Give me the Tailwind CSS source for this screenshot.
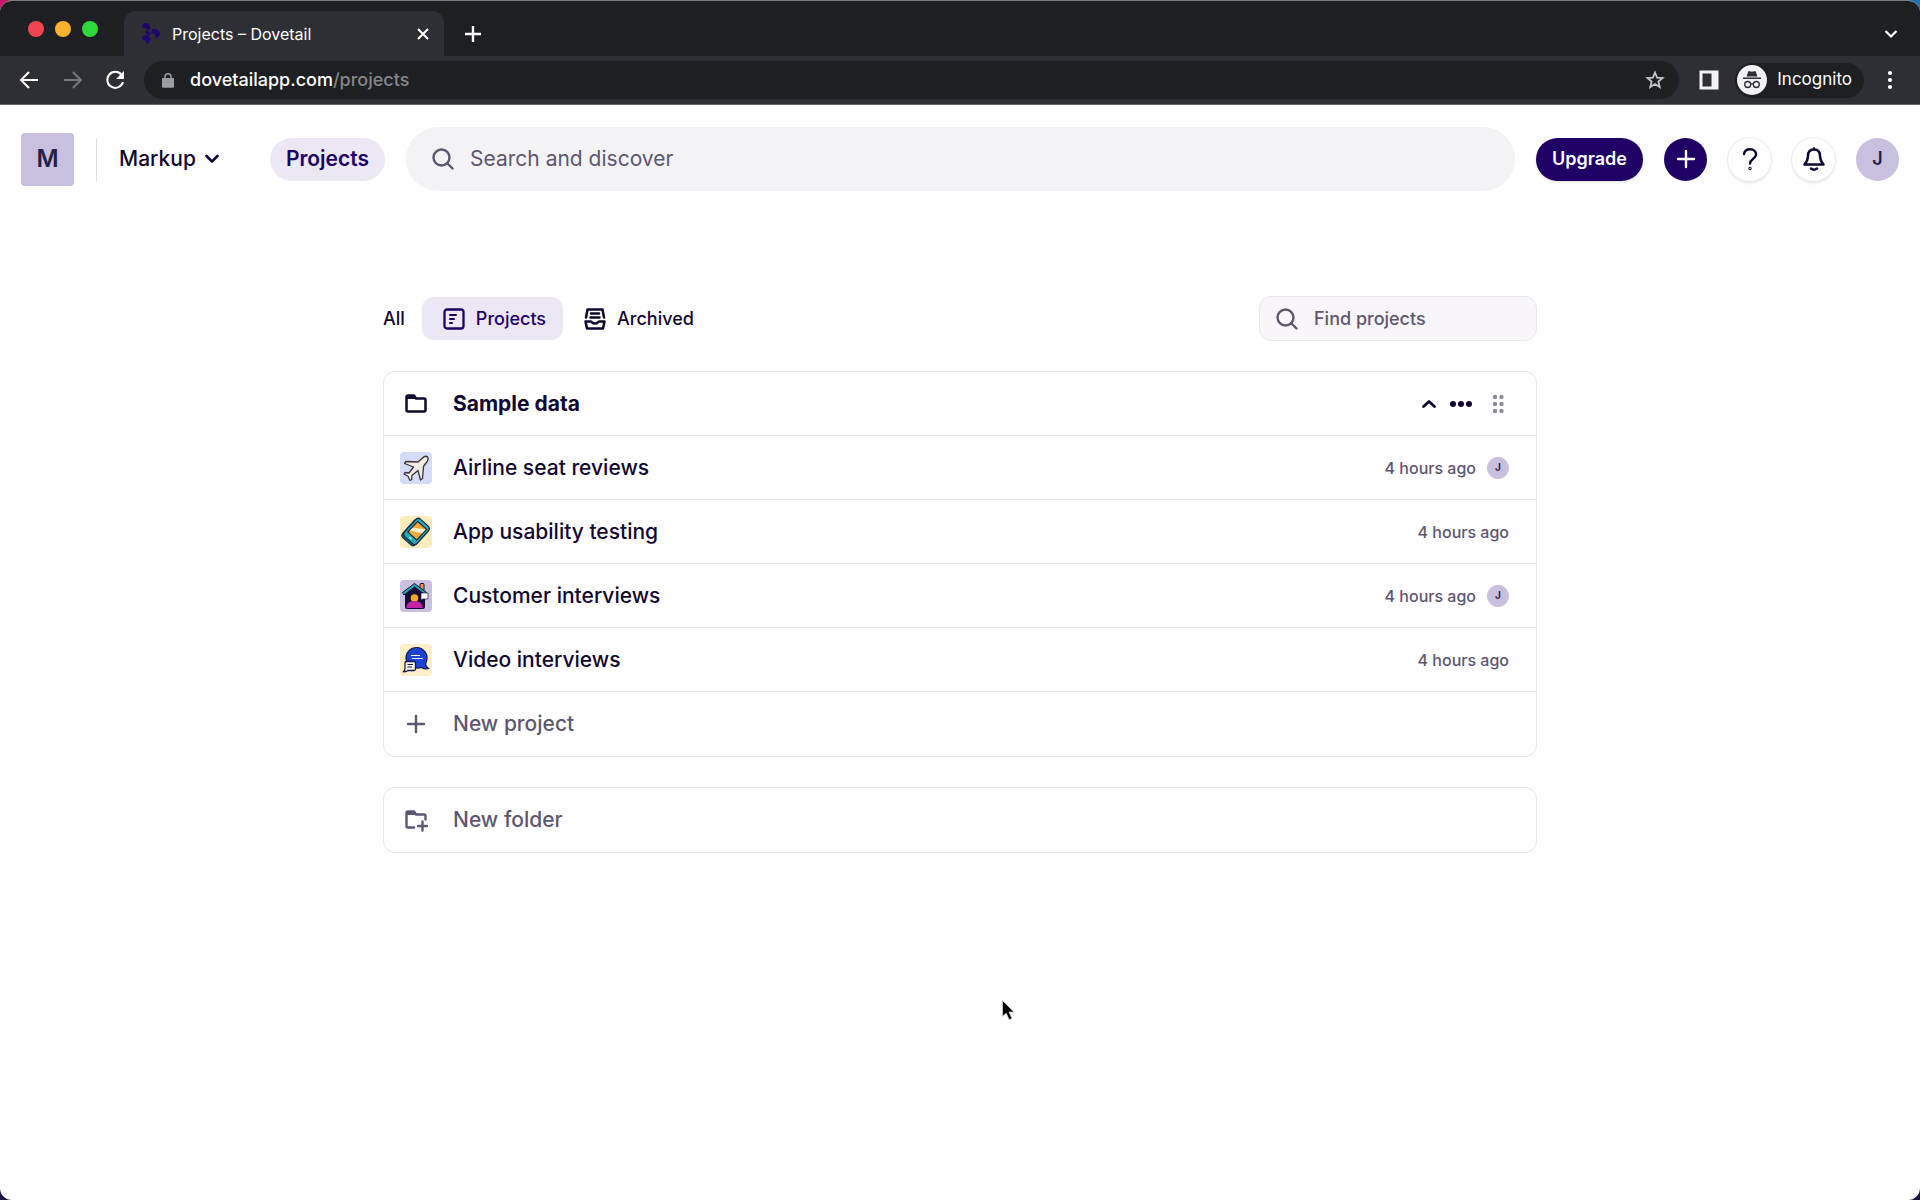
<!DOCTYPE html>
<html lang="en">

<head>
    <meta charset="UTF-8">
    <meta name="viewport" content="width=device-width, initial-scale=1.0">
    <title>Projects – Dovetail</title>
    <script src="https://cdn.jsdelivr.net/npm/@tailwindcss/browser@4"></script>
</head>

<body class="bg-linear-to-r from-[#c9146a] to-[#1273b5] font-['Inter',sans-serif] text-[#120730]">

    <div class="bg-[linear-gradient(to_bottom,transparent_50%,#1b1545_50%)]">
    <div class="relative flex min-h-screen flex-col overflow-hidden rounded-xl border-t border-[#77797c] bg-white">

        <!-- Tab strip -->
        <div class="flex h-[55px] items-end bg-[#1e1f22] pl-7 pr-5">
            <div class="flex h-[55px] items-center gap-[11px] pr-[26px]">
                <span class="size-4 rounded-full bg-[#f2444f]"></span>
                <span class="size-4 rounded-full bg-[#f8b22f]"></span>
                <span class="size-4 rounded-full bg-[#30d63c]"></span>
            </div>
            <div class="flex h-[45px] w-[320px] items-center rounded-t-xl bg-[#2e2f34] pl-[17px] pr-[13px]">
                <svg class="h-[22px] w-5 shrink-0" viewBox="0 0 20 22" fill="#20066b">
                    <path d="M2 1C5-1 9 0 9.500 5L8 8C7 6 4 5 1 4Z" />
                    <path d="M2 13C5 11 9 13 10 17L6 22C6 19 4 17 1 16Z" />
                    <path d="M11 6C16 5 19 8 19 12L14 16C15 12 14 10 10 10Z" />
                    <path d="M6 7 10 11 7 13 4 10Z" />
                </svg>
                <span class="ml-[11px] flex-1 text-base text-white">Projects – Dovetail</span>
                <button aria-label="Close tab" class="text-white">
                    <svg class="size-4" viewBox="0 0 16 16" fill="none" stroke="currentColor" stroke-width="2"><path d="m3 3 10 10M13 3 3 13" /></svg>
                </button>
            </div>
            <button aria-label="New tab" class="ml-5 flex h-[45px] items-center text-white">
                <svg class="size-[18px]" viewBox="0 0 18 18" fill="none" stroke="currentColor" stroke-width="2.400"><path d="M9 1v16M1 9h16" /></svg>
            </button>
            <button aria-label="Search tabs" class="ml-auto flex h-[45px] items-center text-white">
                <svg class="size-[18px]" viewBox="0 0 18 18" fill="none" stroke="currentColor" stroke-width="2.200"><path d="m3.500 6 5.500 5.500L14.500 6" /></svg>
            </button>
        </div>

        <!-- Toolbar -->
        <div class="flex h-[49px] items-center border-b border-[#66676b] bg-[#2e2f34] pl-[19px] pr-5 text-white">
            <button aria-label="Back">
                <svg class="size-5" viewBox="0 0 20 20" fill="none" stroke="currentColor" stroke-width="2"><path d="M19 10H3M10 2l-8 8 8 8" /></svg>
            </button>
            <button aria-label="Forward" class="ml-6 text-[#77787c]">
                <svg class="size-5" viewBox="0 0 20 20" fill="none" stroke="currentColor" stroke-width="2"><path d="M1 10h16M10 2l8 8-8 8" /></svg>
            </button>
            <button aria-label="Reload" class="ml-[22px]">
                <svg class="size-5" viewBox="0 0 20 20" fill="none" stroke="currentColor" stroke-width="2"><path d="M16.500 4.800A8 8 0 1 0 18 12" /><path d="M19 1v8h-8Z" fill="currentColor" stroke="none" /></svg>
            </button>
            <div class="ml-[19px] flex h-[38px] flex-1 items-center rounded-full bg-[#1e1f22] pl-[18px] pr-[14px]">
                <svg class="h-[15px] w-3 shrink-0" viewBox="0 0 12 15" fill="#9b9ca2"><path d="M1.500 5h9A1.200 1.200 0 0 1 12 6.300v7.200a1.200 1.200 0 0 1-1.200 1.300H1.200A1.200 1.200 0 0 1 0 13.500V6.300A1.200 1.200 0 0 1 1.500 5Z" /><path d="M3 6V3.800a3 3 0 0 1 6 0V6" fill="none" stroke="#9b9ca2" stroke-width="1.500" /></svg>
                <a href="#" class="ml-4 flex-1 text-lg font-medium">dovetailapp.com<span class="text-[#85868b]">/projects</span></a>
                <button aria-label="Bookmark" class="text-[#c3c4c8]">
                    <svg class="size-5" viewBox="0 0 20 20" fill="none" stroke="currentColor" stroke-width="1.800"><path d="m10 2.500 2.100 5.100 5.500.4-4.200 3.600 1.300 5.400L10 14.100 5.300 17l1.300-5.400L2.400 8l5.500-.4Z" /></svg>
                </button>
            </div>
            <button aria-label="Side panel" class="ml-5">
                <svg class="size-5" viewBox="0 0 20 20"><path d="M.5.500h19v19H.5ZM3.500 3.500v13h9v-13Z" fill="#f1f1f6" fill-rule="evenodd" /></svg>
            </button>
            <div class="ml-4 flex h-[35px] items-center rounded-full bg-[#1e1f22] pl-[2px] pr-3">
                <svg class="size-[30px]" viewBox="0 0 30 30">
                    <circle cx="15" cy="15" r="15" fill="#f1f1f6" />
                    <path d="M6 12.500h18v1.500H6ZM9.500 11.500l2-5.500 3.500.7 3.500-.7 2 5.500Z" fill="#2e2f34" />
                    <g fill="none" stroke="#2e2f34" stroke-width="1.300"><circle cx="10.700" cy="19.500" r="3" /><circle cx="19.300" cy="19.500" r="3" /><path d="M13.700 19q1.300-.8 2.600 0" /></g>
                </svg>
                <span class="ml-[10px] text-[17px]">Incognito</span>
            </div>
            <button aria-label="Menu" class="ml-4">
                <svg class="size-5" viewBox="0 0 20 20" fill="currentColor"><circle cx="10" cy="3" r="2.100" /><circle cx="10" cy="10" r="2.100" /><circle cx="10" cy="17" r="2.100" /></svg>
            </button>
        </div>

        <!-- App header -->
        <header class="flex items-center px-[21px] pt-[27px] pb-5">
            <span class="flex size-[53px] items-center justify-center rounded bg-[#c9bfdf] text-2xl font-semibold text-[#291e45]">M</span>
            <span class="ml-[22px] h-[43px] w-px bg-[#dddce2]"></span>
            <button class="ml-[22px] flex items-center gap-2 text-[21px] font-medium">
                Markup
                <svg class="size-4" viewBox="0 0 16 16" fill="none" stroke="currentColor" stroke-width="2.600" stroke-linecap="round" stroke-linejoin="round"><path d="m2.500 5 5.500 5.500L13.500 5" /></svg>
            </button>
            <a href="#" class="ml-[50px] flex h-[43px] items-center rounded-full bg-[#ebe7f3] px-4 text-[21px] font-semibold text-[#1f0065]">Projects</a>
            <label class="-my-[5px] ml-[21px] flex h-16 flex-1 items-center gap-4 rounded-full bg-[#f3f3f6] px-[26px] text-[#5f566f]">
                <svg class="size-[22px] shrink-0" viewBox="0 0 22 22" fill="none" stroke="currentColor" stroke-width="2.400" stroke-linecap="round"><circle cx="9.500" cy="9.500" r="8" /><path d="m15.500 15.500 5 5" /></svg>
                <input type="text" aria-label="Search and discover" placeholder="Search and discover" class="w-full text-[21px] outline-none placeholder:text-[#5f566f]">
            </label>
            <div class="ml-[21px] flex items-center gap-[21px]">
                <button class="h-[43px] rounded-full bg-[#1f0065] px-4 text-lg font-semibold text-white shadow-sm">Upgrade</button>
                <button aria-label="Create" class="flex size-[43px] items-center justify-center rounded-full bg-[#1f0065] text-white">
                    <svg class="size-5" viewBox="0 0 20 20" fill="none" stroke="currentColor" stroke-width="2.400" stroke-linecap="round"><path d="M10 2v16M2 10h16" /></svg>
                </button>
                <button aria-label="Help" class="flex size-[43px] items-center justify-center rounded-full bg-white shadow-[0_0_0_1px_#ececf0,0_2px_3px_#00000022]">
                    <svg class="size-6" viewBox="0 0 24 24" fill="none" stroke="currentColor" stroke-width="2.400" stroke-linecap="round" stroke-linejoin="round"><path d="M6 7C6.500 4 9 2.300 12 2.300c3.500 0 6 2.100 6 5.200 0 4.500-6 4.500-6 9" /><circle cx="12" cy="21.500" r=".5" /></svg>
                </button>
                <button aria-label="Notifications" class="flex size-[43px] items-center justify-center rounded-full bg-white shadow-[0_0_0_1px_#ececf0,0_2px_3px_#00000022]">
                    <svg class="size-6" viewBox="0 0 24 24" fill="none" stroke="currentColor" stroke-width="2.500" stroke-linecap="round" stroke-linejoin="round"><path d="M12 1.500v1M12 2.500c-4 0-6 2.800-6 6.500 0 3.500-1 5.500-3.500 8.500h19C19 14.500 18 12.500 18 9c0-3.700-2-6.500-6-6.500ZM9 21.500c1.800 1.400 4.200 1.400 6 0" /></svg>
                </button>
                <button class="size-[43px] rounded-full bg-[#c9bfdf] text-lg font-semibold text-[#291e45]">J</button>
            </div>
        </header>

        <main class="mx-auto w-full max-w-[1154px] pt-[90px] pb-8">

            <!-- Filters -->
            <div class="flex items-center justify-between">
                <nav class="flex items-center text-lg font-medium">
                    <a href="#">All</a>
                    <a href="#" class="ml-[17px] flex h-[43px] items-center gap-[11px] rounded-xl bg-[#ebe7f3] pl-[21px] pr-[17px] text-[#1f0065]">
                        <svg class="size-[22px]" viewBox="0 0 22 22" fill="none" stroke="currentColor" stroke-width="2.300" stroke-linecap="round"><rect x="1.500" y="1.500" width="19" height="19" rx="2.500" /><path d="M7 7h6M7 11h4M7 15h2" stroke-width="2" /></svg>
                        Projects
                    </a>
                    <a href="#" class="ml-[21px] flex items-center gap-[11px]">
                        <svg class="size-[22px]" viewBox="0 0 22 22" fill="none" stroke="currentColor" stroke-width="2.500" stroke-linecap="round" stroke-linejoin="round"><path d="M2 9.500 3.500 1.500h15l1.500 8M7 5.500h8M6.500 9.500h9M1.500 13.500h5c1.500 0 1.500 2 4.500 2s3-2 4.500-2h5l-1.500 7h-16Z" /></svg>
                        Archived
                    </a>
                </nav>
                <label class="flex h-[45px] w-[278px] items-center gap-4 rounded-xl border border-[#e8e6ec] bg-[#f8f6f9] px-4 text-[#5f566f]">
                    <svg class="size-[22px] shrink-0" viewBox="0 0 22 22" fill="none" stroke="currentColor" stroke-width="2.400" stroke-linecap="round"><circle cx="9.500" cy="9.500" r="8" /><path d="m15.500 15.500 5 5" /></svg>
                    <input type="text" aria-label="Find projects" placeholder="Find projects" class="w-full text-lg font-medium outline-none placeholder:text-[#5f566f]">
                </label>
            </div>

            <!-- Sample data folder -->
            <section class="mt-[30px] divide-y divide-[#e6e5e9] rounded-xl border border-[#e6e5e9] text-[21px] font-medium">
                <div class="flex h-16 items-center pl-4 pr-[27px]">
                    <span class="flex w-8 justify-center">
                        <svg class="size-[22px]" viewBox="0 0 22 22" fill="none" stroke="currentColor" stroke-width="2.500" stroke-linejoin="round"><path d="M1.500 17V4Q1.500 2.500 3 2.500h6l2 3h8q1.500 0 1.500 1.500v10q0 1.500-1.500 1.500H3Q1.500 18.500 1.500 17Z" /><path d="M2 3h7l2 3H2Z" fill="currentColor" stroke="none" /></svg>
                    </span>
                    <h2 class="ml-[21px] flex-1 font-bold">Sample data</h2>
                    <button aria-label="Collapse" class="mr-3">
                        <svg class="size-4" viewBox="0 0 16 16" fill="none" stroke="currentColor" stroke-width="2.800" stroke-linecap="round" stroke-linejoin="round"><path d="m2.500 10.500 5.500-5 5.500 5" /></svg>
                    </button>
                    <button aria-label="More" class="mr-[14px]">
                        <svg class="size-6" viewBox="0 0 24 24" fill="currentColor"><circle cx="4" cy="12" r="3" /><circle cx="12" cy="12" r="3" /><circle cx="20" cy="12" r="3" /></svg>
                    </button>
                    <button aria-label="Drag" class="text-[#8f8a99]">
                        <svg class="size-[22px]" viewBox="0 0 22 22" fill="currentColor"><circle cx="8" cy="4" r="2.200" /><circle cx="14.500" cy="4" r="2.200" /><circle cx="8" cy="11" r="2.200" /><circle cx="14.500" cy="11" r="2.200" /><circle cx="8" cy="18" r="2.200" /><circle cx="14.500" cy="18" r="2.200" /></svg>
                    </button>
                </div>
                <a href="#" class="flex h-16 items-center pl-4 pr-[27px]">
                    <svg class="size-8 rounded" viewBox="0 0 32 32">
                        <rect width="32" height="32" fill="#d5dcf8" />
                        <path d="M27.500 5c-1.500-1.500-4 0-5.500 1.500l-4 3.500L6 9.500l-1.500 2 9 3.500-4.500 6-4-.5-1 1.500 4 2.200 2 4.300 1.700-1 .2-4L18 18.500l2.500 9.500 2-1.500 1-12L26 11c1.500-1.500 3-4.500 1.500-6Z" fill="#f2ece2" stroke="#38333f" stroke-width="1.300" stroke-linejoin="round" />
                    </svg>
                    <span class="ml-[21px] flex-1">Airline seat reviews</span>
                    <span class="text-base text-[#5f566f]">4 hours ago</span>
                    <span class="ml-[11px] flex size-[22px] items-center justify-center rounded-full bg-[#c9bfdf] text-[10px] font-bold text-[#291e45]">J</span>
                </a>
                <a href="#" class="flex h-16 items-center pl-4 pr-[27px]">
                    <svg class="size-8 rounded" viewBox="0 0 32 32">
                        <rect width="32" height="32" fill="#fdedbd" />
                        <g transform="rotate(42 16 16)" stroke="#14283f" stroke-width="1.200">
                            <rect x="7" y="5" width="17" height="24" rx="3.500" fill="#13808c" />
                            <rect x="7.500" y="3.500" width="17" height="23.500" rx="3.500" fill="#25adb7" />
                            <rect x="10" y="7" width="12" height="14.500" fill="#f5aa35" />
                            <path d="m10.600 15 10.800-7.400v5.400l-10.800 6Z" fill="#fff0cb" stroke="none" />
                            <path d="M14.500 24.200h3" stroke="#d9f5f5" />
                        </g>
                    </svg>
                    <span class="ml-[21px] flex-1">App usability testing</span>
                    <span class="text-base text-[#5f566f]">4 hours ago</span>
                </a>
                <a href="#" class="flex h-16 items-center pl-4 pr-[27px]">
                    <svg class="size-8 rounded" viewBox="0 0 32 32">
                        <rect width="32" height="32" fill="#c9bfdf" />
                        <rect x="20" y="3.500" width="4" height="8" rx="1" fill="#f19a47" stroke="#160b38" />
                        <path d="M5 14 15 6l10 8v13q0 2-2 2H7q-2 0-2-2Z" fill="#160b38" />
                        <path d="m2.500 12.500 12-9 12 9-1.500 2-10.500-7.500L4 15Z" fill="#22a6ae" stroke="#160b38" stroke-linejoin="round" />
                        <circle cx="14.500" cy="18" r="3.800" fill="#f5a62b" />
                        <path d="M6.500 28c0-5 3-7 8-7s8 2 8 7Z" fill="#c024a2" />
                        <path d="M21 13h7v6h-5l-2 1Z" fill="#fff" stroke="#160b38" stroke-width=".6" />
                    </svg>
                    <span class="ml-[21px] flex-1">Customer interviews</span>
                    <span class="text-base text-[#5f566f]">4 hours ago</span>
                    <span class="ml-[11px] flex size-[22px] items-center justify-center rounded-full bg-[#c9bfdf] text-[10px] font-bold text-[#291e45]">J</span>
                </a>
                <a href="#" class="flex h-16 items-center pl-4 pr-[27px]">
                    <svg class="size-8 rounded" viewBox="0 0 32 32">
                        <rect width="32" height="32" fill="#fdedc8" />
                        <path d="M16.500 3.500a10.500 10.500 0 0 1 9.500 15c-.6 1.800.5 4.500 2.500 6-2.500.7-5 .3-6.500-1-10 2.500-16-3-16-9.500a10.500 10.500 0 0 1 10.500-10.500Z" fill="#1c43d2" stroke="#14194a" stroke-width="1.200" />
                        <path d="M11 11.500h9M12 14.500h11" stroke="#fff" stroke-width="1.100" />
                        <path d="M6.500 17.500H14q1.500 0 1.500 1.500v6q0 1.500-1.500 1.500H8q-2 1.500-4.500 1.200Q5 26 5 24.500V19q0-1.500 1.500-1.500Z" fill="#fff5e2" stroke="#14194a" stroke-width="1.300" />
                        <path d="M7.500 20.500H13M7.500 23H12" stroke="#14194a" stroke-width="1.200" />
                    </svg>
                    <span class="ml-[21px] flex-1">Video interviews</span>
                    <span class="text-base text-[#5f566f]">4 hours ago</span>
                </a>
                <button class="flex h-16 w-full items-center pl-4 text-[#5f566f]">
                    <span class="flex w-8 justify-center">
                        <svg class="size-[22px]" viewBox="0 0 22 22" fill="none" stroke="currentColor" stroke-width="2.400" stroke-linecap="round"><path d="M11 3v16M3 11h16" /></svg>
                    </span>
                    <span class="ml-[21px]">New project</span>
                </button>
            </section>

            <button class="mt-[30px] flex h-[66px] w-full items-center rounded-xl border border-[#e6e5e9] pl-4 text-[21px] font-medium text-[#5f566f]">
                <span class="flex w-8 justify-center">
                    <svg class="size-6" viewBox="0 0 24 24" fill="none" stroke="currentColor" stroke-width="2.400" stroke-linecap="round" stroke-linejoin="round"><path d="M10 19.500H4Q2.500 19.500 2.500 18V5Q2.500 3.500 4 3.500h6l2 3h8q1.500 0 1.500 1.500v3.500M18.500 13.500v9M14 18h9" /><path d="M3 4h7l2 3H3Z" fill="currentColor" stroke="none" /></svg>
                </span>
                <span class="ml-[21px]">New folder</span>
            </button>
        </main>

        <!-- Mouse pointer -->
        <svg class="absolute top-[998px] left-[1001px] h-6 w-[15px]" viewBox="0 0 15 24"><path d="M1.500 1.500v16l3.700-3.300 3 6.500 2.800-1.300-3-6.300h5Z" fill="#000" stroke="#ddd" stroke-width=".7" /></svg>
    </div>
    </div>

</body>

</html>
